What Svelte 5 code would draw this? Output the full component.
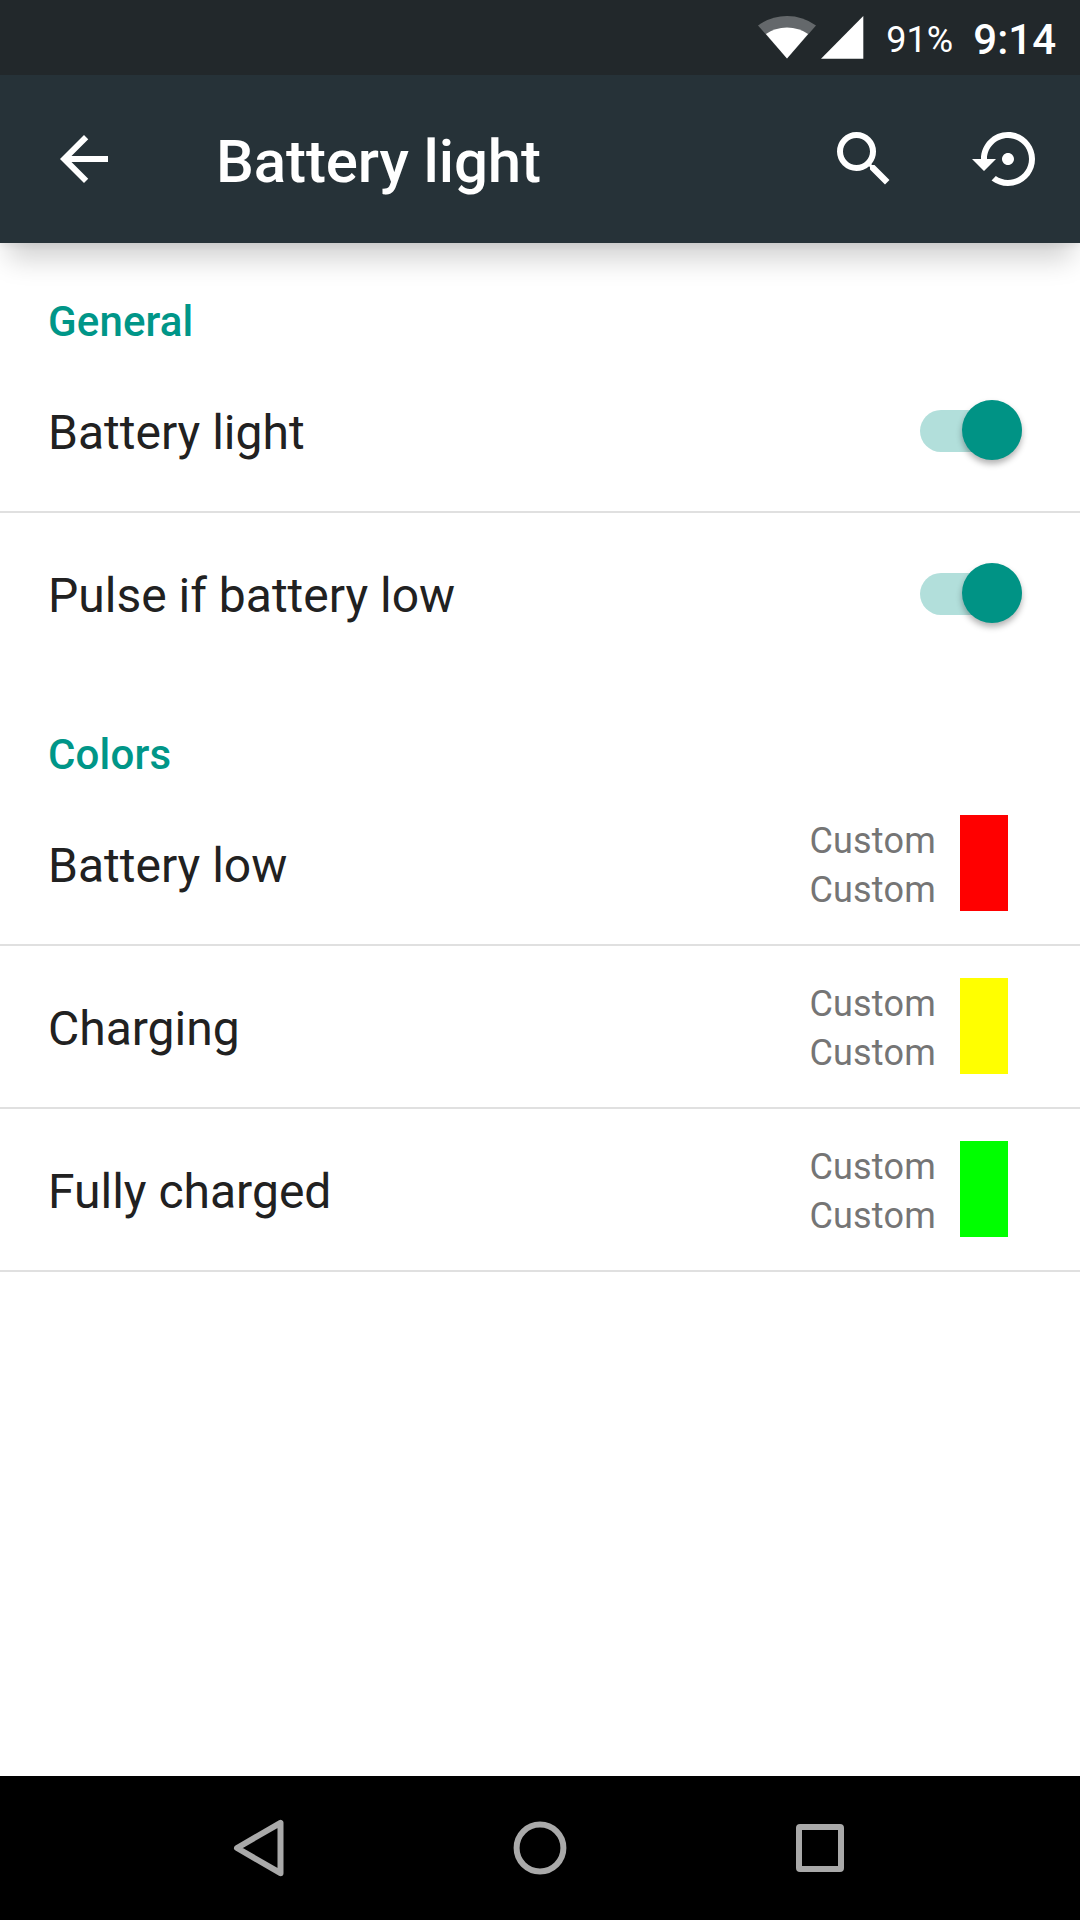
<script>
  const switches = $state([
    { title: 'Battery light', on: true },
    { title: 'Pulse if battery low', on: true }
  ]);

  const colors = [
    { title: 'Battery low', speed: 'Custom', length: 'Custom', color: '#ff0000' },
    { title: 'Charging', speed: 'Custom', length: 'Custom', color: '#ffff00' },
    { title: 'Fully charged', speed: 'Custom', length: 'Custom', color: '#00ff00' }
  ];
</script>

<div class="screen">
  <div class="status-bar">
    <svg class="wifi" width="58" height="43" viewBox="0 0 58 43">
      <path d="M0 9.5Q13 0 29 0T58 9.5L29 42.5z" fill="#fff" fill-opacity="0.3" />
      <path d="M7.9 18Q17 11.5 29 11.5T50.1 18L29 42.5z" fill="#fff" />
    </svg>
    <svg class="signal" width="43" height="43" viewBox="0 0 43 43">
      <path d="M0 42.7L42.3 0v42.7z" fill="#fff" />
    </svg>
    <span class="battery">91%</span>
    <span class="clock">9:14</span>
  </div>

  <header class="toolbar">
    <button class="icon-button" aria-label="Back">
      <svg viewBox="0 0 24 24">
        <path d="M20 11H7.83l5.59-5.59L12 4l-8 8 8 8 1.41-1.41L7.83 13H20v-2z" />
      </svg>
    </button>
    <h1>Battery light</h1>
    <button class="icon-button" aria-label="Search">
      <svg viewBox="0 0 24 24">
        <path d="M15.5 14h-.79l-.28-.27A6.471 6.471 0 0 0 16 9.5 6.5 6.5 0 1 0 9.5 16c1.61 0 3.09-.59 4.23-1.57l.27.28v.79l5 4.99L20.49 19l-4.99-5zm-6 0C7.01 14 5 11.99 5 9.5S7.01 5 9.5 5 14 7.01 14 9.5 11.99 14 9.5 14z" />
      </svg>
    </button>
    <button class="icon-button" aria-label="Reset">
      <svg viewBox="0 0 24 24">
        <path d="M14 12c0-1.1-.9-2-2-2s-2 .9-2 2 .9 2 2 2 2-.9 2-2zm-2-9c-4.97 0-9 4.03-9 9H0l4 4 4-4H5c0-3.87 3.13-7 7-7s7 3.13 7 7-3.13 7-7 7c-1.51 0-2.91-.49-4.06-1.3l-1.42 1.44C8.04 20.3 9.94 21 12 21c4.97 0 9-4.03 9-9s-4.03-9-9-9z" />
      </svg>
    </button>
  </header>

  <main>
    <h2>General</h2>
    {#each switches as item, i}
      <div class="row" class:last={i === switches.length - 1}>
        <span class="title">{item.title}</span>
        <button
          class="switch"
          class:on={item.on}
          role="switch"
          aria-checked={item.on}
          aria-label={item.title}
          onclick={() => (item.on = !item.on)}
        >
          <span class="thumb"></span>
        </button>
      </div>
    {/each}

    <h2>Colors</h2>
    {#each colors as item}
      <div class="row">
        <span class="title">{item.title}</span>
        <div class="timing">
          <span>{item.speed}</span>
          <span>{item.length}</span>
        </div>
        <div class="swatch" style="background: {item.color}"></div>
      </div>
    {/each}
  </main>

  <nav>
    <svg viewBox="0 0 72 72">
      <path d="M13 36L56.5 10.8v50.4z" />
    </svg>
    <svg viewBox="0 0 72 72">
      <circle cx="36" cy="36" r="23.4" />
    </svg>
    <svg viewBox="0 0 72 72">
      <rect x="15" y="15" width="42" height="42" rx="1" />
    </svg>
  </nav>
</div>

<style>
  :global(body) {
    margin: 0;
  }

  .screen {
    display: flex;
    flex-direction: column;
    width: 1080px;
    height: 1920px;
    overflow: hidden;
    background: #fff;
    font-family: Roboto, 'Liberation Sans', sans-serif;
  }

  button {
    padding: 0;
    border: none;
    background: none;
  }

  .status-bar {
    display: flex;
    justify-content: flex-end;
    height: 75px;
    padding-right: 24px;
    box-sizing: border-box;
    background: #22282b;
    color: #fff;
  }

  .wifi,
  .signal {
    margin-top: 16px;
  }

  .signal {
    margin-left: 5px;
  }

  .battery {
    margin-left: 21.7px;
    font-size: 36px;
    line-height: 80px;
  }

  .clock {
    margin-left: 20.3px;
    font-size: 42px;
    font-weight: 500;
    line-height: 79px;
  }

  .toolbar {
    display: flex;
    align-items: center;
    height: 168px;
    padding: 0 36px 0 48px;
    box-sizing: border-box;
    background: #263238;
    color: #fff;
    box-shadow:
      0 4px 6px rgba(0, 0, 0, 0.05),
      0 24px 26px -8px rgba(0, 0, 0, 0.18);
  }

  .icon-button {
    width: 72px;
    height: 72px;
    margin-left: 72px;
  }

  .icon-button:first-child {
    margin-left: 0;
  }

  .icon-button svg {
    display: block;
    fill: #fff;
  }

  h1 {
    flex: 1;
    margin: 4px 0 0 96px;
    font-size: 60px;
    font-weight: 500;
    letter-spacing: -0.1px;
  }

  main {
    flex: 1;
  }

  h2 {
    height: 107px;
    margin: 0;
    padding: 0 48px;
    font-size: 42px;
    font-weight: 500;
    line-height: 157px;
    letter-spacing: 0.15px;
    color: #009688;
  }

  .row {
    display: flex;
    align-items: center;
    height: 161px;
    padding: 0 48px;
    border-bottom: 2px solid #e0e0e0;
  }

  .row.last {
    border-bottom-color: transparent;
  }

  .title {
    flex: 1;
    padding-top: 3px;
    font-size: 48px;
    color: #212121;
  }

  .switch {
    display: flex;
    align-items: center;
    width: 101.5px;
    height: 42px;
    margin: 1px 10.5px 0 0;
    border-radius: 21px;
    background: #bdbdbd;
  }

  .thumb {
    flex: none;
    width: 60px;
    height: 60px;
    margin-bottom: 2px;
    border-radius: 50%;
    background: #f1f1f1;
    box-shadow: 0 4px 6px rgba(0, 0, 0, 0.3);
  }

  .switch.on {
    justify-content: flex-end;
    background: #b2dfdb;
  }

  .switch.on .thumb {
    background: #009385;
  }

  .timing {
    display: flex;
    flex-direction: column;
    margin-right: 24px;
    padding-top: 4px;
    font-size: 36px;
    line-height: 49px;
    letter-spacing: 0.2px;
    color: #757575;
  }

  .swatch {
    width: 48px;
    height: 96px;
    margin: 0 24px 1px 0;
  }

  nav {
    display: flex;
    align-items: center;
    justify-content: center;
    gap: 208px;
    height: 144px;
    background: #000;
  }

  nav svg {
    width: 72px;
    height: 72px;
    fill: none;
    stroke: #a9a9a9;
    stroke-width: 6;
    stroke-linejoin: round;
  }
</style>
